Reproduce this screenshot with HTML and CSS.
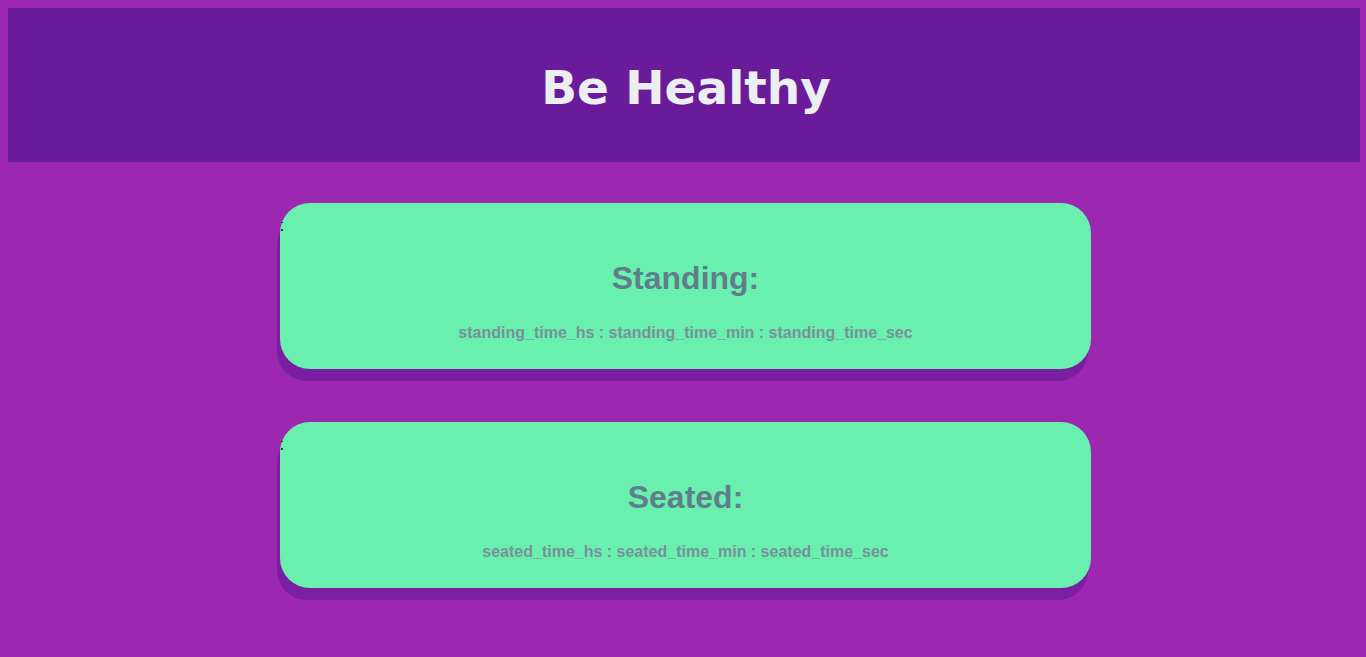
FILE: index.html
```html
<!DOCTYPE html>
<html>
<head>
<meta charset="utf-8">
<title>Be Healthy</title>
<link rel="stylesheet" href="styles.css">
</head>
<body>
<header class="top">
  <h1 class="title">Be Healthy</h1>
</header>
<main class="cards">
  <section class="card">
    <span class="mark"></span>
    <h2 class="card-title">Standing:</h2>
    <p class="card-time">standing_time_hs : standing_time_min : standing_time_sec</p>
  </section>
  <section class="card">
    <span class="mark"></span>
    <h2 class="card-title">Seated:</h2>
    <p class="card-time">seated_time_hs : seated_time_min : seated_time_sec</p>
  </section>
</main>
</body>
</html>
```
FILE: styles.css
```css
html, body {
  margin: 0;
  padding: 0;
}
body {
  background: #9c27b0;
  padding: 8px;
  min-height: 657px;
  box-sizing: border-box;
  font-family: "Liberation Sans", Arial, sans-serif;
}
.top {
  background: #6a1b9a;
  height: 154px;
  box-sizing: border-box;
  margin-right: -2px;
  padding: 5px 0 0 4px;
  display: flex;
  align-items: center;
  justify-content: center;
}
.title {
  margin: 0;
  font-family: "DejaVu Sans", Verdana, sans-serif;
  font-weight: bold;
  font-size: 47px;
  color: #eceff1;
  line-height: 56px;
}
.cards {
  display: flex;
  flex-direction: column;
  align-items: center;
  gap: 53px;
  padding-top: 41px;
  padding-left: 5px;
}
.card {
  position: relative;
  width: 811px;
  box-sizing: border-box;
  background: #69f0ae;
  border-radius: 30px;
  box-shadow: -3px 12px 0 0 #7b1fa2;
  padding: 57px 0 27px;
  text-align: center;
}
.mark {
  position: absolute;
  left: 1px;
  top: 19px;
  width: 2px;
  height: 1px;
  background: #2a3a3a;
  box-shadow: 0 7px 0 #2a3a3a, 0 8px 0 #2a3a3a;
}
.card-title {
  margin: 0 0 27px;
  font-size: 32px;
  line-height: 37px;
  font-weight: bold;
  color: #607d8b;
}
.card-time {
  margin: 0;
  font-size: 16px;
  line-height: 18px;
  font-weight: bold;
  color: #78909c;
}
```
